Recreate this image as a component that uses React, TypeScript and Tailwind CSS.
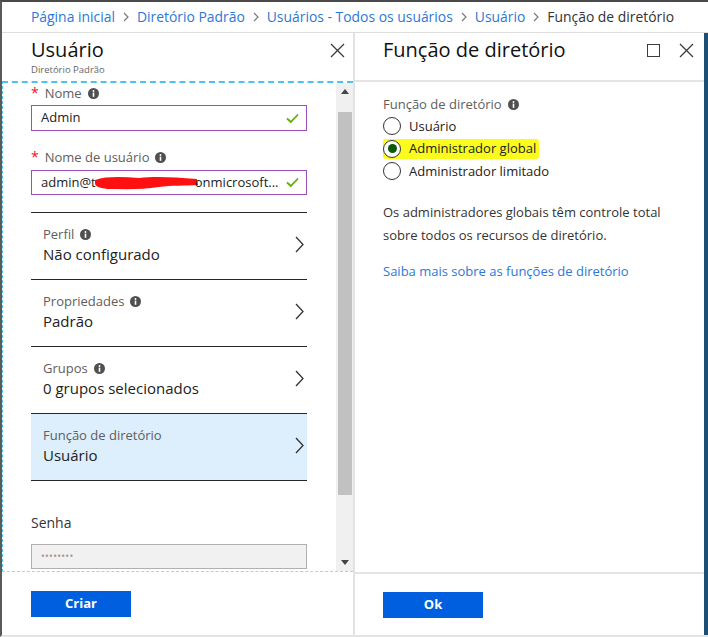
import React from 'react';

const LINK = 'text-[#2b78d8]';

function Crumb() {
  return (
    <svg width="6" height="10" viewBox="0 0 6 10" className="mx-[8px] shrink-0">
      <path d="M1 1 L5 5 L1 9" fill="none" stroke="#7a7a7a" strokeWidth="1.2" />
    </svg>
  );
}

function Info() {
  return (
    <svg width="11" height="11" viewBox="0 0 11 11" className="inline-block ml-[6px] shrink-0">
      <circle cx="5.5" cy="5.5" r="5.5" fill="#505050" />
      <rect x="4.7" y="4.6" width="1.6" height="4.2" fill="#fff" />
      <circle cx="5.5" cy="3" r="0.95" fill="#fff" />
    </svg>
  );
}

function Close() {
  return (
    <svg width="15" height="15" viewBox="0 0 15 15">
      <path d="M1 1 L14 14 M14 1 L1 14" stroke="#3c3c3c" strokeWidth="1.3" />
    </svg>
  );
}

function Check() {
  return (
    <svg width="13" height="11" viewBox="0 0 13 11">
      <path d="M1 5.5 L4.8 9 L12 1.5" fill="none" stroke="#5cb000" strokeWidth="1.8" />
    </svg>
  );
}

function Chevron() {
  return (
    <svg width="9" height="17" viewBox="0 0 9 17">
      <path d="M1 1 L8 8.5 L1 16" fill="none" stroke="#333" strokeWidth="1.3" />
    </svg>
  );
}

function Scribble() {
  return (
    <svg width="106" height="16" viewBox="0 0 106 16" className="inline-block shrink-0 -ml-[3px] -mr-[4px]">
      <path
        d="M2 5 C 14 1, 30 2, 46 3 C 62 1, 80 2, 104 4 L 105 10 C 92 11, 78 10, 66 12 C 48 15, 30 14, 14 14 C 8 13, 3 12, 2 9 Z"
        fill="#ff1010"
      />
    </svg>
  );
}

function Row({ label, value, info = true, selected = false }: { label: string; value: string; info?: boolean; selected?: boolean }) {
  return (
    <div className={`h-[67px] border-b border-[#262626] pl-3 pr-[3px] flex items-center justify-between ${selected ? 'bg-[#ddeefc]' : ''}`}>
      <div className="pb-[3px]">
        <div className="flex items-center text-[13px] leading-[18px] text-[#5e5e5e]">
          {label}
          {info && <Info />}
        </div>
        <div className="text-[15px] leading-[20px] text-[#222] mt-[1px]">{value}</div>
      </div>
      <div className="-mt-[4px]">
        <Chevron />
      </div>
    </div>
  );
}

function Radio({ label, checked = false }: { label: string; checked?: boolean }) {
  return (
    <div className="flex items-center h-[22.5px]">
      <span className={`flex items-center gap-[8px] ${checked ? 'bg-[#fbfb1e] rounded-[3px] pr-[3px] -mr-[3px]' : ''}`}>
        <span className="w-[18px] h-[18px] rounded-full border border-[#333] bg-white flex items-center justify-center">
          {checked && <span className="w-[9px] h-[9px] rounded-full bg-[#0a5a0a]" />}
        </span>
        <span className="text-[13px] text-[#222]">{label}</span>
      </span>
    </div>
  );
}

export default function App() {
  return (
    <div className="w-[708px] h-[637px] overflow-hidden bg-white flex flex-col border-t-2 border-l-2 border-b-2 border-t-[#4a4a4a] border-l-[#5a5a5a] border-b-[#e4e4e4] font-['Open_Sans',sans-serif]">
      {/* breadcrumb */}
      <div className="h-[31px] shrink-0 border-b border-[#dedede] flex items-center pl-[29px] text-[13.9px]">
        <span className={LINK}>Página inicial</span>
        <Crumb />
        <span className={LINK}>Diretório Padrão</span>
        <Crumb />
        <span className={LINK}>Usuários - Todos os usuários</span>
        <Crumb />
        <span className={LINK}>Usuário</span>
        <Crumb />
        <span className="text-[#333]">Função de diretório</span>
      </div>

      <div className="flex flex-1 min-h-0">
        {/* left blade */}
        <div className="w-[353px] shrink-0 flex flex-col border-r-2 border-[#e2e2e2]">
          <div className="h-[48px] shrink-0 pl-[29px] pr-[8px] pt-[4px] flex justify-between">
            <div>
              <div className="text-[20px] leading-[26px] text-[#111]">Usuário</div>
              <div className="text-[9.5px] leading-[14px] text-[#666]">Diretório Padrão</div>
            </div>
            <div className="mt-[6px]">
              <Close />
            </div>
          </div>

          <div className="h-[491px] shrink-0 flex border-t-2 border-l border-b border-dashed border-t-[#4ac3ef] border-l-[#4ac3ef] border-b-[#9fd6ec]">
            <div className="flex-1 min-w-0 overflow-hidden pl-[28px] pr-[29px]">
              <div className="pt-[1px] flex items-center text-[13px] leading-[18px] text-[#5e5e5e]">
                <span className="text-[#e81123] mr-[6px] text-[14px]">*</span>Nome
                <Info />
              </div>
              <div className="mt-[3px] h-[26px] border border-[#9a4fc0] flex items-center justify-between pl-[9px] pr-[7px]">
                <span className="text-[13px] text-[#222]">Admin</span>
                <Check />
              </div>

              <div className="mt-[17px] flex items-center text-[13px] leading-[18px] text-[#5e5e5e]">
                <span className="text-[#e81123] mr-[6px] text-[14px]">*</span>Nome de usuário
                <Info />
              </div>
              <div className="mt-[4px] h-[25px] border border-[#9a4fc0] flex items-center justify-between pl-[9px] pr-[7px]">
                <span className="flex items-center text-[13px] text-[#222] whitespace-nowrap">
                  admin@t
                  <Scribble />
                  onmicrosoft...
                </span>
                <Check />
              </div>

              <div className="mt-[17px] border-t border-[#262626]">
                <Row label="Perfil" value="Não configurado" />
                <Row label="Propriedades" value="Padrão" />
                <Row label="Grupos" value="0 grupos selecionados" />
                <Row label="Função de diretório" value="Usuário" info={false} selected />
              </div>

              <div className="mt-[32px] text-[14px] leading-[20px] text-[#333]">Senha</div>
              <div className="mt-[11px] h-[25px] bg-[#f1f1f1] border border-[#b0b0b0] flex items-center pl-[9px] text-[10px] tracking-[0.3px] text-[#9a9a9a]">
                ••••••••
              </div>
            </div>

            {/* scrollbar */}
            <div className="w-[17px] shrink-0 bg-[#f0f0f0] flex flex-col items-center">
              <div className="h-[17px] w-full flex items-center justify-center">
                <svg width="8" height="5" viewBox="0 0 8 5">
                  <path d="M0 5 L4 0 L8 5 Z" fill="#444" />
                </svg>
              </div>
              <div className="mt-[12px] h-[383px] w-[14px] bg-[#c1c1c1]" />
              <div className="flex-1" />
              <div className="h-[17px] w-full flex items-center justify-center">
                <svg width="8" height="5" viewBox="0 0 8 5">
                  <path d="M0 0 L8 0 L4 5 Z" fill="#444" />
                </svg>
              </div>
            </div>
          </div>

          <div className="flex-1 pl-[29px] pt-[18px]">
            <button className="w-[100px] h-[26px] bg-[#005fde] text-white text-[13px] font-bold">Criar</button>
          </div>
        </div>

        {/* right blade */}
        <div className="flex-1 flex flex-col border-r-4 border-[#1d4e73]">
          <div className="h-[49px] shrink-0 border-b-2 border-[#e4e4e4] pl-[28px] pr-[10px] pt-[4px] flex justify-between">
            <div className="text-[20px] leading-[26px] text-[#111]">Função de diretório</div>
            <div className="flex items-start gap-[19px] mt-[6px]">
              <span className="mt-[1px] w-[13px] h-[13px] border border-[#3c3c3c]" />
              <Close />
            </div>
          </div>

          <div className="h-[490px] shrink-0 pl-[28px] pt-[13px]">
            <div className="flex items-center text-[13px] leading-[18px] text-[#5e5e5e]">
              Função de diretório
              <Info />
            </div>
            <div className="mt-[2px]">
              <Radio label="Usuário" />
              <Radio label="Administrador global" checked />
              <Radio label="Administrador limitado" />
            </div>
            <p className="mt-[18px] w-[290px] text-[13px] leading-[23px] text-[#333]">
              Os administradores globais têm controle total sobre todos os recursos de diretório.
            </p>
            <div className={`mt-[13px] text-[13px] leading-[22px] ${LINK}`}>Saiba mais sobre as funções de diretório</div>
          </div>

          <div className="flex-1 border-t-2 border-[#e4e4e4] pl-[28px] pt-[17px]">
            <button className="w-[100px] h-[26px] bg-[#005fde] text-white text-[13px] font-bold">Ok</button>
          </div>
        </div>
      </div>
    </div>
  );
}
